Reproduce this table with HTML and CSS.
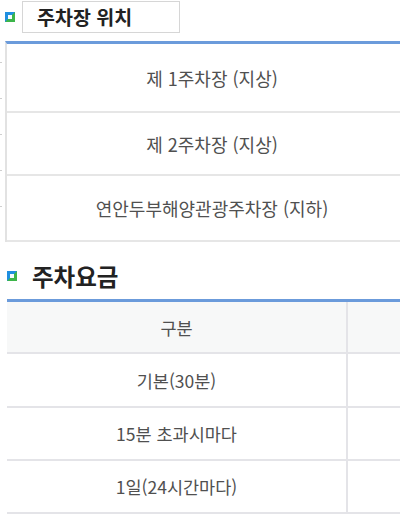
FILE: index.html
```html
<!DOCTYPE html>
<html lang="ko">
<head>
<meta charset="utf-8">
<title>주차장 안내</title>
<link rel="stylesheet" href="styles.css">
</head>
<body>
<div class="page">
  <section class="sec1">
    <div class="head1">
      <span class="ico"></span>
      <h2 class="titlebox">주차장 위치</h2>
    </div>
    <div class="tbl1">
      <div class="row1 ra">제 1주차장 (지상)</div>
      <div class="row1 rb">제 2주차장 (지상)</div>
      <div class="row1 rc">연안두부해양관광주차장 (지하)</div>
    </div>
  </section>
  <section class="sec2">
    <div class="head2">
      <span class="ico"></span>
      <h2 class="title2">주차요금</h2>
    </div>
    <div class="tbl2">
      <div class="cell th c1">구분</div>
      <div class="cell th c2"></div>
      <div class="cell c1 h54">기본(30분)</div>
      <div class="cell c2 h54"></div>
      <div class="cell c1 h53">15분 초과시마다</div>
      <div class="cell c2 h53"></div>
      <div class="cell c1 h53">1일(24시간마다)</div>
      <div class="cell c2 h53"></div>
    </div>
  </section>
</div>
</body>
</html>
```

FILE: styles.css
```css
html, body {
  margin: 0;
  padding: 0;
  overflow: hidden;
  background: #ffffff;
}
body {
  width: 400px;
  height: 520px;
  font-family: "Noto Sans CJK KR", "Noto Sans", sans-serif;
  color: #505050;
}
.page {
  display: flex;
  flex-direction: column;
  width: 400px;
  overflow: hidden;
}
.sec1 {
  display: flex;
  flex-direction: column;
  background-image: repeating-linear-gradient(to bottom, transparent 0 35px, #cfcfcf 35px 36px);
  background-size: 2px 216px;
  background-position: 0 27px;
  background-repeat: no-repeat;
}
.ico {
  display: block;
  box-sizing: border-box;
  width: 10px;
  height: 10px;
  border: 3px solid;
  border-color: #1f8fe0 #3db54a #3db54a #1f8fe0;
  background: #f4fbff;
  flex: none;
}
.head1 {
  display: flex;
  align-items: center;
  gap: 7px;
  height: 33px;
  padding-left: 5px;
}
.titlebox {
  margin: 1px 0 0 0;
  box-sizing: border-box;
  width: 158px;
  height: 32px;
  border: 1px solid #d6d6d6;
  padding-left: 14px;
  font-size: 19.5px;
  line-height: 29px;
  font-weight: 700;
  color: #222222;
}
.tbl1 {
  margin: 8px 0 0 5px;
  width: 410px;
  flex: none;
  border-top: 3px solid #6b9bdb;
  border-left: 2px solid #e2e2e2;
  display: flex;
  flex-direction: column;
}
.row1 {
  display: flex;
  align-items: center;
  justify-content: center;
  border-bottom: 2px solid #e6e6e6;
  font-size: 18px;
  color: #505050;
}
.ra { height: 67px; }
.rb { height: 61px; }
.rc { height: 64px; }
.sec2 {
  display: flex;
  flex-direction: column;
  margin-top: 18px;
}
.head2 {
  display: flex;
  align-items: center;
  gap: 15px;
  height: 32px;
  padding-left: 7px;
}
.title2 {
  margin: 0;
  font-size: 23.5px;
  line-height: 32px;
  font-weight: 700;
  color: #222222;
}
.tbl2 {
  margin: 7px 0 0 7px;
  width: 420px;
  flex: none;
  border-top: 3px solid #6b9bdb;
  display: grid;
  grid-template-columns: 341px 1fr;
}
.cell {
  display: flex;
  align-items: center;
  justify-content: center;
  border-bottom: 2px solid #e4e4e8;
  font-size: 17.5px;
  color: #505050;
}
.c1 { border-right: 2px solid #e4e4e8; }
.th {
  height: 50px;
  background: #f7f8f8;
}
.h54 { height: 52px; }
.h53 { height: 51px; }
```
